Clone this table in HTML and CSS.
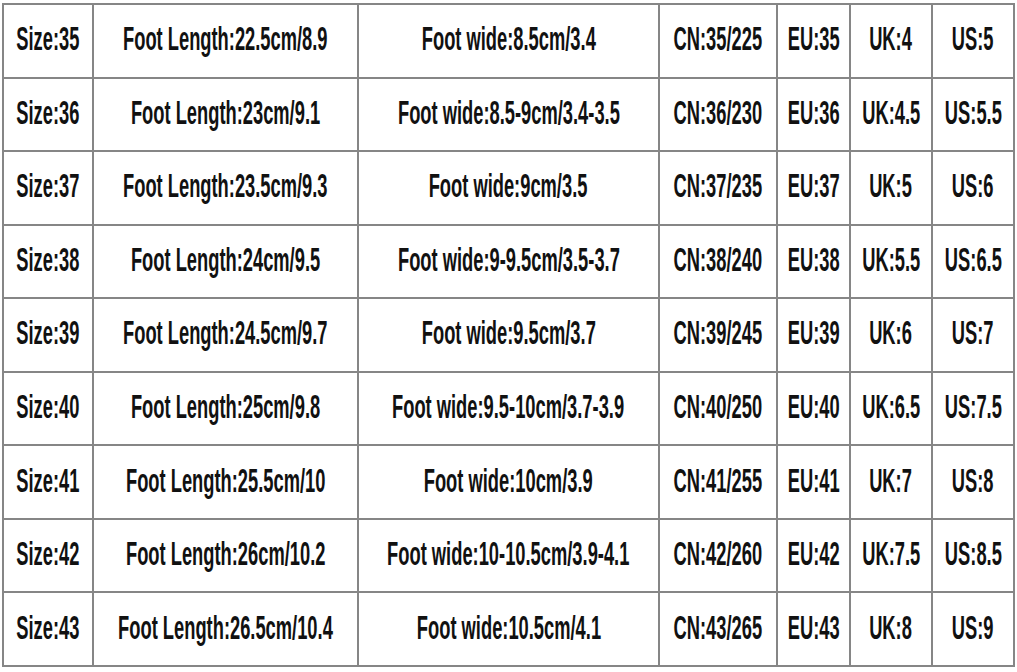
FILE: index.html
```html
<!DOCTYPE html>
<html lang="en">
<head>
<meta charset="utf-8">
<title>Size Chart</title>
<link rel="stylesheet" href="styles.css">
</head>
<body>
<div class="chart">
  <div class="c"><span class="t">Size:35</span></div><div class="c"><span class="t">Foot Length:22.5cm/8.9</span></div><div class="c"><span class="t">Foot wide:8.5cm/3.4</span></div><div class="c"><span class="t">CN:35/225</span></div><div class="c"><span class="t">EU:35</span></div><div class="c"><span class="t">UK:4</span></div><div class="c"><span class="t">US:5</span></div>
  <div class="c"><span class="t">Size:36</span></div><div class="c"><span class="t">Foot Length:23cm/9.1</span></div><div class="c"><span class="t">Foot wide:8.5-9cm/3.4-3.5</span></div><div class="c"><span class="t">CN:36/230</span></div><div class="c"><span class="t">EU:36</span></div><div class="c"><span class="t">UK:4.5</span></div><div class="c"><span class="t">US:5.5</span></div>
  <div class="c"><span class="t">Size:37</span></div><div class="c"><span class="t">Foot Length:23.5cm/9.3</span></div><div class="c"><span class="t">Foot wide:9cm/3.5</span></div><div class="c"><span class="t">CN:37/235</span></div><div class="c"><span class="t">EU:37</span></div><div class="c"><span class="t">UK:5</span></div><div class="c"><span class="t">US:6</span></div>
  <div class="c"><span class="t">Size:38</span></div><div class="c"><span class="t">Foot Length:24cm/9.5</span></div><div class="c"><span class="t">Foot wide:9-9.5cm/3.5-3.7</span></div><div class="c"><span class="t">CN:38/240</span></div><div class="c"><span class="t">EU:38</span></div><div class="c"><span class="t">UK:5.5</span></div><div class="c"><span class="t">US:6.5</span></div>
  <div class="c"><span class="t">Size:39</span></div><div class="c"><span class="t">Foot Length:24.5cm/9.7</span></div><div class="c"><span class="t">Foot wide:9.5cm/3.7</span></div><div class="c"><span class="t">CN:39/245</span></div><div class="c"><span class="t">EU:39</span></div><div class="c"><span class="t">UK:6</span></div><div class="c"><span class="t">US:7</span></div>
  <div class="c"><span class="t">Size:40</span></div><div class="c"><span class="t">Foot Length:25cm/9.8</span></div><div class="c"><span class="t">Foot wide:9.5-10cm/3.7-3.9</span></div><div class="c"><span class="t">CN:40/250</span></div><div class="c"><span class="t">EU:40</span></div><div class="c"><span class="t">UK:6.5</span></div><div class="c"><span class="t">US:7.5</span></div>
  <div class="c"><span class="t">Size:41</span></div><div class="c"><span class="t">Foot Length:25.5cm/10</span></div><div class="c"><span class="t">Foot wide:10cm/3.9</span></div><div class="c"><span class="t">CN:41/255</span></div><div class="c"><span class="t">EU:41</span></div><div class="c"><span class="t">UK:7</span></div><div class="c"><span class="t">US:8</span></div>
  <div class="c"><span class="t">Size:42</span></div><div class="c"><span class="t">Foot Length:26cm/10.2</span></div><div class="c"><span class="t">Foot wide:10-10.5cm/3.9-4.1</span></div><div class="c"><span class="t">CN:42/260</span></div><div class="c"><span class="t">EU:42</span></div><div class="c"><span class="t">UK:7.5</span></div><div class="c"><span class="t">US:8.5</span></div>
  <div class="c"><span class="t">Size:43</span></div><div class="c"><span class="t">Foot Length:26.5cm/10.4</span></div><div class="c"><span class="t">Foot wide:10.5cm/4.1</span></div><div class="c"><span class="t">CN:43/265</span></div><div class="c"><span class="t">EU:43</span></div><div class="c"><span class="t">UK:8</span></div><div class="c"><span class="t">US:9</span></div>
</div>
</body>
</html>
```
FILE: styles.css
```css
html, body {
  margin: 0;
  padding: 0;
  background: #ffffff;
  overflow: hidden;
}
body {
  padding: 3px 0 0 2px;
  font-family: "Liberation Sans", Arial, sans-serif;
}
.chart {
  width: 1013px;
  height: 664px;
  box-sizing: border-box;
  padding: 2px;
  background: #868686;
  display: grid;
  grid-template-columns: 88px 263px 299px 116px 71px 80px 80px;
  grid-template-rows: repeat(9, 1fr);
  gap: 2px;
}
.c {
  background: #ffffff;
  display: flex;
  align-items: center;
  justify-content: center;
  overflow: hidden;
  padding-bottom: 4px;
}
.t {
  white-space: nowrap;
  font-size: 33px;
  font-weight: bold;
  line-height: 1;
  color: #111111;
  transform: scaleX(0.555);
  flex: none;
}
```
